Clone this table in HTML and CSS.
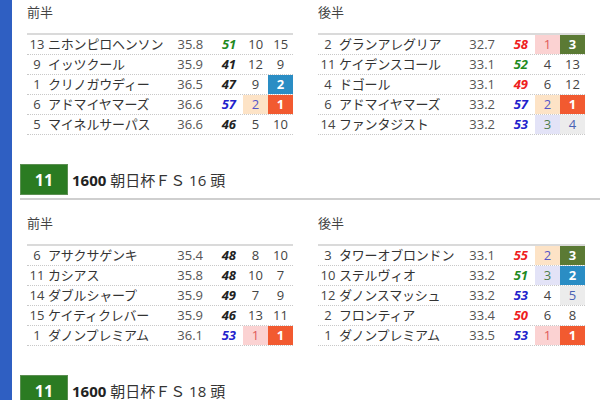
FILE: index.html
```html
<!DOCTYPE html>
<html lang="ja">
<head>
<meta charset="utf-8">
<title>上がり</title>
<link rel="stylesheet" href="styles.css">
</head>
<body>
<div class="page">
  <div class="bar"></div>
  <main class="main">
    <section class="race race-first">
      <div class="halves">
        <div class="half">
          <div class="label">前半</div>
          <div class="table">
            <div class="row"><span class="no">13</span><span class="name">ニホンピロヘンソン</span><span class="time">35.8</span><span class="score s-green">51</span><span class="c">10</span><span class="c">15</span></div>
            <div class="row"><span class="no">9</span><span class="name">イッツクール</span><span class="time">35.9</span><span class="score">41</span><span class="c">12</span><span class="c">9</span></div>
            <div class="row"><span class="no">1</span><span class="name">クリノガウディー</span><span class="time">36.5</span><span class="score">47</span><span class="c">9</span><span class="c r2">2</span></div>
            <div class="row"><span class="no">6</span><span class="name">アドマイヤマーズ</span><span class="time">36.6</span><span class="score s-blue">57</span><span class="c p2">2</span><span class="c r1">1</span></div>
            <div class="row"><span class="no">5</span><span class="name">マイネルサーパス</span><span class="time">36.6</span><span class="score">46</span><span class="c">5</span><span class="c">10</span></div>
          </div>
        </div>
        <div class="half">
          <div class="label">後半</div>
          <div class="table">
            <div class="row"><span class="no">2</span><span class="name">グランアレグリア</span><span class="time">32.7</span><span class="score s-red">58</span><span class="c p1">1</span><span class="c r3">3</span></div>
            <div class="row"><span class="no">11</span><span class="name">ケイデンスコール</span><span class="time">33.1</span><span class="score s-green">52</span><span class="c">4</span><span class="c">13</span></div>
            <div class="row"><span class="no">4</span><span class="name">ドゴール</span><span class="time">33.1</span><span class="score s-red">49</span><span class="c">6</span><span class="c">12</span></div>
            <div class="row"><span class="no">6</span><span class="name">アドマイヤマーズ</span><span class="time">33.2</span><span class="score s-blue">57</span><span class="c p2">2</span><span class="c r1">1</span></div>
            <div class="row"><span class="no">14</span><span class="name">ファンタジスト</span><span class="time">33.2</span><span class="score s-blue">53</span><span class="c p3">3</span><span class="c p4">4</span></div>
          </div>
        </div>
      </div>
    </section>

    <section class="race">
      <header class="race-head">
        <span class="race-no">11</span>
        <span class="race-title"><b>1600</b> 朝日杯ＦＳ 16 頭</span>
      </header>
      <div class="halves">
        <div class="half">
          <div class="label">前半</div>
          <div class="table">
            <div class="row"><span class="no">6</span><span class="name">アサクサゲンキ</span><span class="time">35.4</span><span class="score">48</span><span class="c">8</span><span class="c">10</span></div>
            <div class="row"><span class="no">11</span><span class="name">カシアス</span><span class="time">35.8</span><span class="score">48</span><span class="c">10</span><span class="c">7</span></div>
            <div class="row"><span class="no">14</span><span class="name">ダブルシャープ</span><span class="time">35.9</span><span class="score">49</span><span class="c">7</span><span class="c">9</span></div>
            <div class="row"><span class="no">15</span><span class="name">ケイティクレバー</span><span class="time">35.9</span><span class="score">46</span><span class="c">13</span><span class="c">11</span></div>
            <div class="row"><span class="no">1</span><span class="name">ダノンプレミアム</span><span class="time">36.1</span><span class="score s-blue">53</span><span class="c p1">1</span><span class="c r1">1</span></div>
          </div>
        </div>
        <div class="half">
          <div class="label">後半</div>
          <div class="table">
            <div class="row"><span class="no">3</span><span class="name">タワーオブロンドン</span><span class="time">33.1</span><span class="score s-red">55</span><span class="c p2">2</span><span class="c r3">3</span></div>
            <div class="row"><span class="no">10</span><span class="name">ステルヴィオ</span><span class="time">33.2</span><span class="score s-green">51</span><span class="c p3">3</span><span class="c r2">2</span></div>
            <div class="row"><span class="no">12</span><span class="name">ダノンスマッシュ</span><span class="time">33.2</span><span class="score s-blue">53</span><span class="c">4</span><span class="c p4">5</span></div>
            <div class="row"><span class="no">2</span><span class="name">フロンティア</span><span class="time">33.4</span><span class="score s-red">50</span><span class="c">6</span><span class="c">8</span></div>
            <div class="row"><span class="no">1</span><span class="name">ダノンプレミアム</span><span class="time">33.5</span><span class="score s-blue">53</span><span class="c p1">1</span><span class="c r1">1</span></div>
          </div>
        </div>
      </div>
    </section>

    <section class="race">
      <header class="race-head">
        <span class="race-no">11</span>
        <span class="race-title"><b>1600</b> 朝日杯ＦＳ 18 頭</span>
      </header>
    </section>
  </main>
</div>
</body>
</html>
```

FILE: styles.css
```css
* { box-sizing: border-box; }
html, body { margin: 0; padding: 0; background: #fff; }
body {
  font-family: "Open Sans", "Noto Sans CJK JP", sans-serif;
  color: #333;
  overflow: hidden;
  height: 400px;
}
.page {
  display: flex;
  min-height: 400px;
}
.bar {
  flex: 0 0 12px;
  background: #2f5fc2;
}
.main {
  flex: 1;
  padding-left: 8px;
}
.race { margin-bottom: 29px; }
.race-first .halves { padding-top: 2px; }
.race-head {
  display: flex;
  align-items: center;
  gap: 4px;
  padding-bottom: 3px;
  border-bottom: 2px solid #cfcfcf;
}
.race-no {
  width: 48px;
  height: 31px;
  background: #2b7b22;
  border: 1px solid #5b8f52;
  color: #fff;
  font-weight: 700;
  font-size: 16px;
  display: flex;
  align-items: center;
  justify-content: center;
}
.race-title {
  font-size: 15px;
  color: #333;
}
.race-title b { font-weight: 700; color: #222; }
.race-head + .halves { padding-top: 13px; }
.halves {
  display: grid;
  grid-template-columns: 266px 267px;
  column-gap: 25px;
  padding-left: 7px;
}
.label {
  font-size: 13px;
  line-height: 20px;
  color: #444;
  margin-bottom: 11px;
}
.table { border-top: 2px solid #dadada; }
.row {
  display: grid;
  grid-template-columns: 20px 1fr 44px 36px 25px 25px;
  height: 20px;
  border-bottom: 1px dotted #c8c8c8;
  font-size: 13px;
  line-height: 19px;
}
.no { text-align: center; color: #444; }
.name { padding-left: 1px; color: #333; white-space: nowrap; letter-spacing: -0.2px; }
.time { text-align: right; padding-right: 4px; color: #555; }
.score {
  text-align: right;
  padding-right: 7px;
  font-weight: 700;
  font-style: italic;
  color: #222;
}
.s-green { color: #1f8a1f; }
.s-red { color: #ee2020; }
.s-blue { color: #2222cc; }
.c { text-align: center; color: #444; }
.r1 { background: #f25a30; color: #fff; font-weight: 700; }
.r2 { background: #2a8dc4; color: #fff; font-weight: 700; }
.r3 { background: #5b7a34; color: #fff; font-weight: 700; }
.p1 { background: #fbd2d2; color: #e05a5a; }
.p2 { background: #fde3c6; color: #5656c8; }
.p3 { background: #e3e3f7; color: #4e7f4e; }
.p4 { background: #ececec; color: #4a62b4; }
```
